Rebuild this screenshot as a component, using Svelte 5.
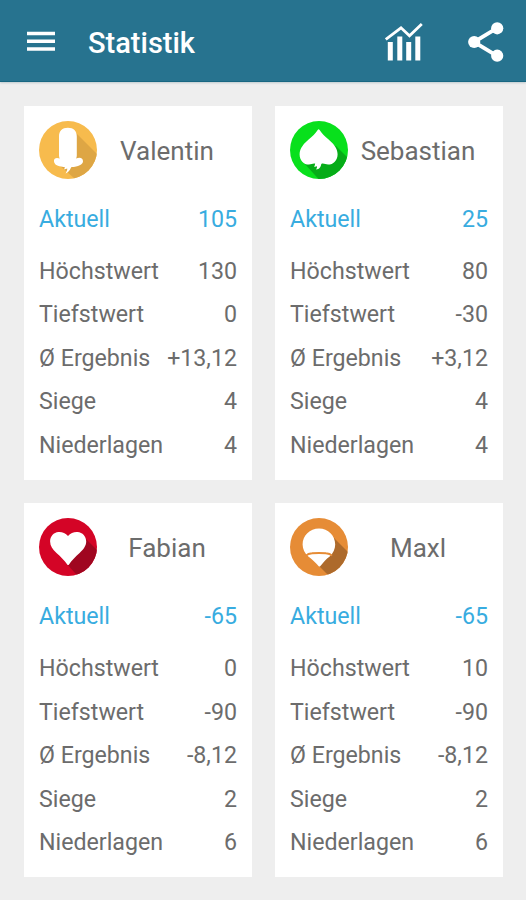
<script>
  const labels = ['Höchstwert', 'Tiefstwert', 'Ø Ergebnis', 'Siege', 'Niederlagen'];
  const players = [
    { name: 'Valentin', suit: 'acorn', current: '105', values: ['130', '0', '+13,12', '4', '4'] },
    { name: 'Sebastian', suit: 'spade', current: '25', values: ['80', '-30', '+3,12', '4', '4'] },
    { name: 'Fabian', suit: 'heart', current: '-65', values: ['0', '-90', '-8,12', '2', '6'] },
    { name: 'Maxl', suit: 'bell', current: '-65', values: ['10', '-90', '-8,12', '2', '6'] }
  ];
  const colors = { acorn: '#f7bb4d', spade: '#08e01c', heart: '#d40426', bell: '#e68c36' };
  const shades = { acorn: '#dea644', spade: '#06ac18', heart: '#a00620', bell: '#ad6a2b' };
  const shadows = {
    acorn: 'M35 10L70 45V70H50L20 44Z',
    spade: 'M46 25L75 54V75H44L14 42Z',
    heart: 'M46 20L75 49V75H54L27 45Z',
    bell: 'M44 20L75 51V75H56L27 46Z'
  };
</script>

<div class="screen">
  <header>
    <svg class="menu" width="28" height="21" viewBox="0 0 28 21"><path d="M0 2.5H28M0 10.3H28M0 18H28" /></svg>
    <h1>Statistik</h1>
    <svg class="chart" width="38" height="38" viewBox="0 0 38 38">
      <path class="trend" d="M.8 16.5L16 4.8L24.5 12.8L36.8 1" />
      <path class="bars" d="M2.8 19H7.8V37.5H2.8ZM12.3 13.5H17.3V37.5H12.3ZM21.2 19H26.2V37.5H21.2ZM30.3 13.5H35.3V37.5H30.3Z" />
    </svg>
    <svg class="share" width="36" height="40" viewBox="0 0 36 40">
      <path d="M29 6.2L6 20L29 33.8" />
      <circle cx="29.2" cy="6.3" r="6.1" /><circle cx="6.2" cy="20" r="6.1" /><circle cx="29.2" cy="33.7" r="6.1" />
    </svg>
  </header>

  <main>
    {#each players as player}
      <section>
        <div class="player">
          <svg class="avatar" viewBox="0 0 58 58">
            <defs><clipPath id="clip-{player.suit}"><circle cx="29" cy="29" r="29" /></clipPath></defs>
            <g clip-path="url(#clip-{player.suit})">
              <rect width="58" height="58" fill={colors[player.suit]} />
              <path d={shadows[player.suit]} fill={shades[player.suit]} />
              {#if player.suit === 'acorn'}
                <path fill="#fff" d="M20 15.5C20 9.5 23.2 6.7 28.9 6.7S37.8 9.5 37.8 15.5V34.5Q37.8 36.5 37 37.6C41.5 35.6 44 37.6 44 40.2C44 43.6 39 45.8 32.6 46.1C31.2 47.5 31 50.7 26.6 52.5C27.4 50.5 28.6 48.8 28.2 47.4L25.2 48.6L25.8 46C24 46 22.5 45.8 20.5 45.3C17.3 44.5 14.9 42.5 14.9 39.9C14.9 37.3 17.5 36 20.8 37.6Q20 36.5 20 34.5Z" />
              {:else if player.suit === 'spade'}
                <path fill="#fff" d="M27.7 9.1Q28.6 7.6 29.6 9.1C31.8 12.6 35 15.5 38.6 18.6C42.8 22.2 47.6 27.2 47.6 33.2C47.6 39.5 43.2 43.6 38.1 43.6C35.5 43.6 33.6 41.9 31.3 42.9C30.8 46 29.5 48 26 48.4C27 47 27.3 45.8 26.8 45.2L24.2 46L25.2 42.8C23.3 42 21.5 43.6 18.9 43.6C13.7 43.6 9.6 39.5 9.6 33.2C9.6 27.2 14.4 22.2 18.6 18.6C22.2 15.5 25.5 12.6 27.7 9.1Z" />
              {:else if player.suit === 'heart'}
                <path fill="#fff" d="M29 18C31.5 14.8 35 13.8 38.5 14C43.6 14.4 47.3 18.5 47.2 23.5C47.1 28 44.6 31.2 40.6 35C36.4 38.8 32.6 42.6 30 46.4Q29.1 47.6 28.2 46.4C25.6 42.6 21.7 38.8 17.5 35C13.5 31.2 11.2 28 11.1 23.5C11 18.5 14.6 14.4 19.5 14C23 13.8 26.5 14.8 29 18Z" />
              {:else}
                <path fill="#fff" d="M29 10.5C38.2 10.5 45.2 17.7 45.2 26.6C45.2 31.2 43 35.5 40 38.2C36 41 32.5 45.3 30.2 48.3Q29.5 48.8 28.7 48.3C25.5 44.6 22 41.1 18 38.2C14.8 35.5 12.6 31.2 12.6 26.6C12.6 17.7 19.8 10.5 29 10.5Z" />
                <path d="M16 37.6Q18 35.6 22 35.3Q29 34.6 36 35.3Q40 35.6 42 37.6" fill="none" stroke="#e68c36" stroke-width="1.9" />
              {/if}
            </g>
          </svg>
          <h2>{player.name}</h2>
        </div>
        <div class="row current"><span>Aktuell</span><span>{player.current}</span></div>
        {#each labels as label, i}
          <div class="row"><span>{label}</span><span>{player.values[i]}</span></div>
        {/each}
      </section>
    {/each}
  </main>
</div>

<style>
  :global(body) { margin: 0; background: #eee; }
  .screen {
    box-sizing: border-box;
    height: 900px;
    overflow: hidden;
    background: #eee;
    font-family: Roboto, "Liberation Sans", sans-serif;
  }
  header {
    display: flex;
    align-items: center;
    box-sizing: border-box;
    height: 82px;
    padding: 2px 22.5px 0 27px;
    background: #27738f;
    border-bottom: 1px solid #176681;
    color: #fff;
    box-shadow: 0 1px 2px #bdc9ce;
  }
  header svg { display: block; fill: none; stroke: #fff; }
  .menu { stroke-width: 3.6; }
  h1 { flex: 1; margin: 2px 0 0 33px; font-size: 29px; line-height: 34px; font-weight: 500; }
  .chart { margin-right: 44.5px; }
  .chart .trend { stroke-width: 2.8; }
  .chart .bars { fill: #fff; stroke: none; }
  .share { stroke-width: 3.8; }
  .share circle { fill: #fff; stroke: none; }
  main {
    display: grid;
    grid-template-columns: 228px 228px;
    grid-auto-rows: 374px;
    gap: 23.4px 23px;
    padding: 24px;
  }
  section { box-sizing: border-box; padding: 14.5px 15px 0; background: #fff; }
  .player { display: flex; align-items: center; height: 58px; }
  .avatar { flex: none; width: 58px; height: 58px; }
  h2 {
    flex: 1;
    margin: 2.4px 0 0;
    font-size: 26px;
    line-height: 32px;
    font-weight: 400;
    text-align: center;
    color: #6c6c6c;
  }
  .row {
    display: flex;
    justify-content: space-between;
    font-size: 23.2px;
    line-height: 43.4px;
    color: #6c6c6c;
    white-space: nowrap;
  }
  .current { margin: 19.2px 0 8.8px; color: #38ace0; }
</style>
